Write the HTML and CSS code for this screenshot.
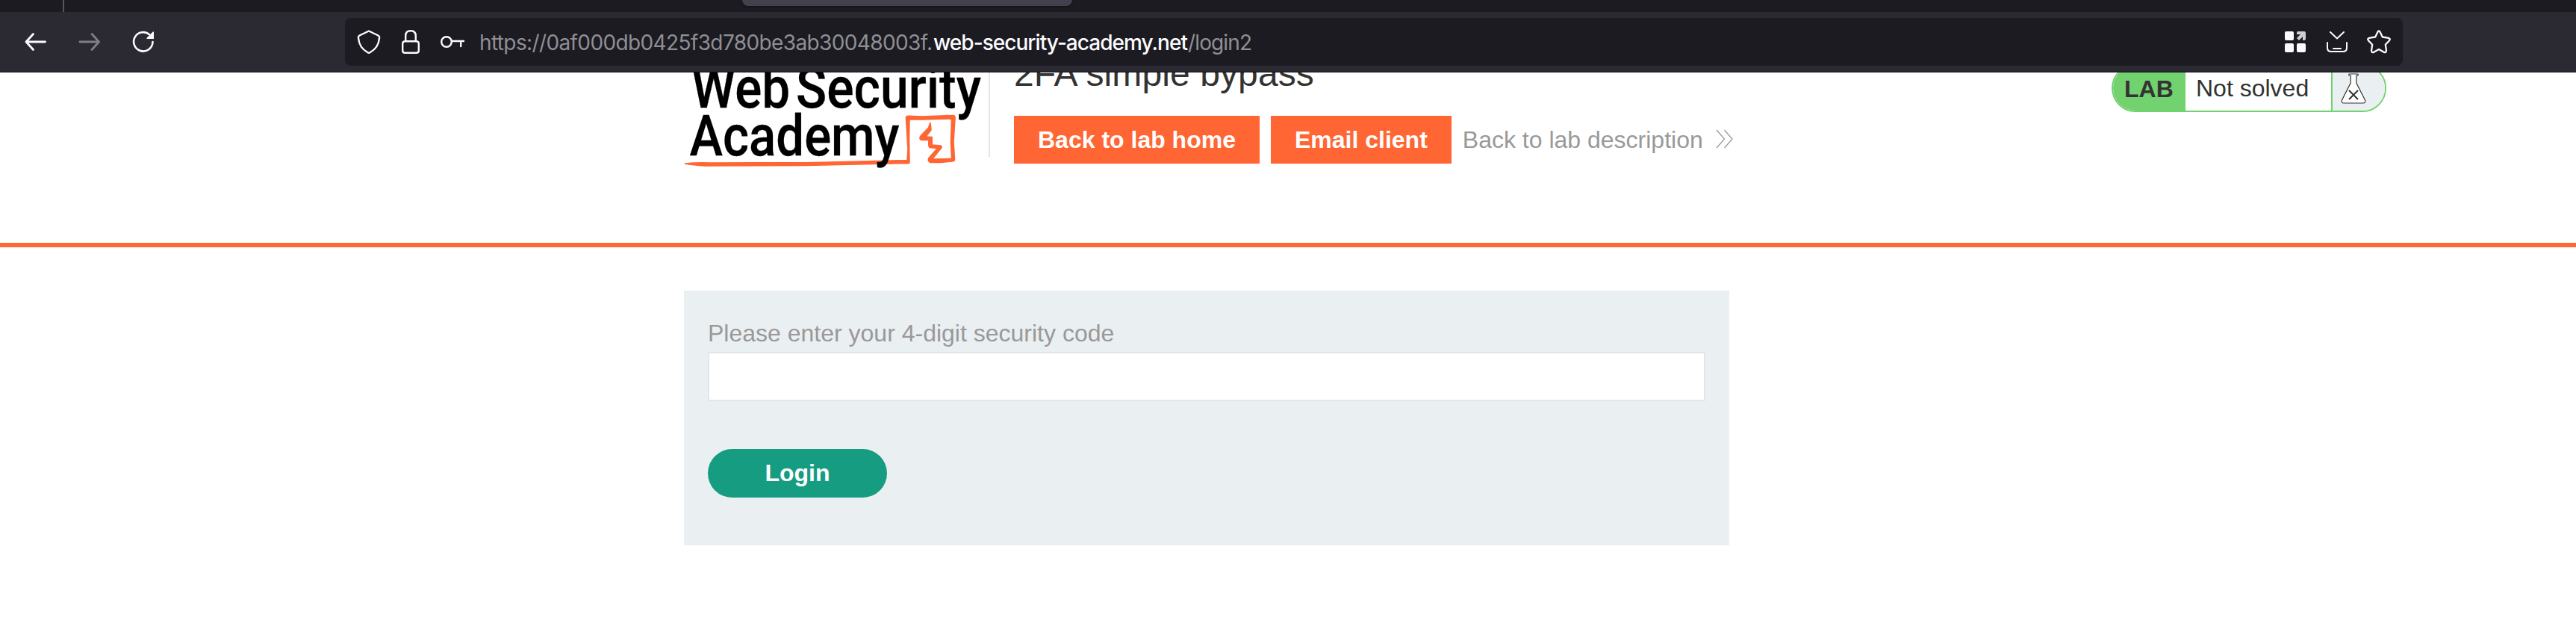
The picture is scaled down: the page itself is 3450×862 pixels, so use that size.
FILE: index.html
```html
<!DOCTYPE html>
<html lang="en">
<head>
<meta charset="utf-8">
<title>2FA simple bypass</title>
<link rel="stylesheet" href="styles.css">
</head>
<body>
<div class="tabstrip"><span class="tab-divider"></span><span class="tab"></span></div>
<div class="toolbar">
  <nav class="nav-icons">
    <svg class="icon" width="32" height="32" viewBox="0 0 32 32"><path d="M28.500 16H3.500M12.500 5.500 3 16 12.500 26.500" stroke-width="2.800"/></svg>
    <svg class="icon dim" width="32" height="32" viewBox="0 0 32 32"><path d="M3 16H28M19 5.500 28.500 16 19 26.500" stroke-width="2.800"/></svg>
    <svg class="icon" width="32" height="32" viewBox="0 0 32 32"><path d="M28.5 16A12.7 12.7 0 1 1 24.5 6.6" stroke-width="2.6"/><path d="M30 2.7V12H20.5Q20 11 21 10.2L28.5 2.8Q29.3 2 30 2.7Z" class="solid"/></svg>
  </nav>
  <div class="urlbar">
    <svg class="icon" width="32" height="32" viewBox="0 0 32 32"><path d="M16 1.5 28.5 7.5Q30.5 8.500 30 11 29 24 17.500 30.200 16 31.200 14.500 30.200 3 24 2 11 1.500 8.500 3.500 7.500Z" stroke-width="2.4"/></svg>
    <svg class="icon lock" width="24" height="32" viewBox="0 0 24 32"><path d="M5.200 15V8Q5.200 1.200 12 1.200T18.800 8V15M4.500 15.200H19.500Q22.800 15.200 22.800 18.500V27.500Q22.800 30.800 19.500 30.800H4.500Q1.200 30.800 1.200 27.500V18.500Q1.200 15.200 4.500 15.200Z" stroke-width="2.4"/></svg>
    <svg class="icon key" width="32" height="32" viewBox="0 0 32 32"><circle cx="8" cy="16" r="6.800" stroke-width="2.4"/><path d="M15 15H32M27.200 15V22" stroke-width="2.4"/></svg>
    <svg class="url" width="1050" height="48" viewBox="0 0 1050 48">
      <text x="0" y="35" textLength="607">https://0af000db0425f3d780be3ab30048003f.</text>
      <text x="608" y="35" textLength="341" class="domain">web-security-academy.net</text>
      <text x="949" y="35" textLength="86">/login2</text>
    </svg>
    <div class="page-actions">
      <svg class="icon" width="28" height="28" viewBox="0 0 28 28"><g class="solid"><rect width="12" height="12" rx="2"/><rect y="16" width="12" height="12" rx="2"/><rect x="16" y="16" width="12" height="12" rx="2"/></g><path class="soft" d="M18 0H26Q28 0 28 2V10Q28 12 26 12H24V7L19 12 16 9 21 4H16V2Q16 0 18 0Z"/></svg>
      <svg class="icon" width="28" height="28" viewBox="0 0 28 28"><path d="M5 1 14 9.500 23 1M1 15V22Q1 27 6 27H22Q27 27 27 22V15M9 23H19" stroke-width="2"/></svg>
      <svg class="icon" width="32" height="32" viewBox="0 0 32 32"><path d="M14.200 3.300Q16 -0.300 17.800 3.300L20.800 9.500 27.800 10.600Q32.500 11.500 29.800 14.500L24.800 19.700 25.900 27.100Q26.300 31.200 22.300 29.600L16 26 9.700 29.600Q5.700 31.200 6.100 27.100L7.200 19.700 2.200 14.500Q-0.500 11.500 4.200 10.600L11.200 9.500Z" stroke-width="2.300"/></svg>
    </div>
  </div>
</div>
<main class="page">
  <header class="lab-header">
    <svg class="logo" width="408" height="128" viewBox="916 97 408 128">
      <path class="ink" d="M917 219Q932 217.500 950 218L1080 217.800 1215 214.500 1216 200 1213.500 158Q1213 155 1217 155.200L1235 156 1276 154.500Q1279.300 154.500 1279 158L1277 190 1278.500 213Q1278.500 216 1275 216L1260 217.500 1246 217.500Q1242 216 1244 211.500L1255.500 198.500 1245 197.500Q1243.200 196 1244 187.500L1234 187.500Q1230.500 186 1233 182L1243.500 171 1246 164 1247 174 1240 183 1248.200 183.500V194L1260 195Q1262.500 197 1259.500 199.500L1248.500 213 1274.500 212.500 1273.500 190 1274.500 159 1235 160 1218 160 1217.500 185 1218 217Q1218 219.500 1214 218.500L1080 221.500 945 222Q928 221 917 219Z"/>
      <text x="926" y="143.500" textLength="132" lengthAdjust="spacingAndGlyphs">Web</text>
      <text x="1066" y="143.500" textLength="248" lengthAdjust="spacingAndGlyphs">Security</text>
      <text x="923.500" y="208" textLength="281" lengthAdjust="spacingAndGlyphs">Academy</text>
    </svg>
    <div class="title-block">
      <h2>2FA simple bypass</h2>
      <div class="links">
        <a class="button">Back to lab home</a>
        <a class="button">Email client</a>
        <a class="back">Back to lab description<svg width="24" height="26" viewBox="0 0 24 26"><path d="M1 1 11.500 13 1 25M11.500 1 22 13 11.500 25"/></svg></a>
      </div>
    </div>
    <div class="status">
      <strong>LAB</strong><span class="state">Not solved</span>
      <span class="flask"><svg width="34" height="42" viewBox="0 0 34 42"><path d="M11.500 1H22.500Q23.500 1 23 3H20.800V13L32.500 36Q33.500 40 30 40H4Q.500 40 1.500 36L13.200 13V3H11Q10.500 1 11.500 1Z" class="glass"/><path d="M11 23 23 35M23 23 11 35" class="cross"/></svg></span>
    </div>
  </header>
  <form class="login">
    <label for="code">Please enter your 4-digit security code</label>
    <input id="code" type="text">
    <button type="button">Login</button>
  </form>
</main>
</body>
</html>
```
FILE: styles.css
```css
* { box-sizing: border-box; }
body { margin: 0; height: 862px; overflow: hidden; background: #fff; color: #333332; font: 32px/1.2 "Liberation Sans", Arial, sans-serif; }
svg { display: block; flex: none; }
.tabstrip { display: flex; height: 16px; background: #1c1b22; }
.tab-divider { width: 2px; height: 16px; margin-left: 84px; background: #57565d; }
.tab { width: 442px; height: 8px; margin-left: 908px; border-radius: 0 0 8px 8px; background: #42414d; box-shadow: 0 0 4px rgba(0,0,0,.5); }
.toolbar { display: flex; height: 81px; padding-top: 8px; background: #2b2a33; border-bottom: 1px solid #0c0c0d; }
.nav-icons { display: flex; width: 462px; height: 64px; padding-left: 32px; gap: 40px; align-items: center; }
.icon { fill: none; stroke: #fbfbfe; stroke-linejoin: round; stroke-linecap: round; }
.dim { opacity: .4; }
.icon .solid { fill: #fbfbfe; stroke: none; }
.icon .soft { fill: #cfcfd1; stroke: none; }
.urlbar { display: flex; align-items: center; width: 2756px; height: 64px; padding: 0 16px; border-radius: 8px; background: #1c1b22; }
.lock { margin-left: 28px; }
.key { margin-left: 28px; }
.url { margin-left: 20px; font: 28px Inter, sans-serif; fill: #8f8f94; }
.url .domain { fill: #fbfbfe; font-weight: 500; }
.page-actions { display: flex; align-items: center; gap: 28px; margin-left: auto; }
.page-actions svg:last-child { margin-left: -2px; }
.lab-header { display: flex; align-items: flex-start; height: 234px; padding-left: 916px; border-bottom: 6px solid #ff6633; overflow: hidden; }
.logo text { font: 500 76px Roboto, sans-serif; fill: #000; stroke: #000; stroke-width: .3; }
.logo .ink { fill: #ff6633; stroke: #ff6633; stroke-width: 1.6; }
.title-block { height: 113px; width: 1504px; padding-left: 32px; border-left: 2px solid #e5e5e5; }
h2 { margin: -26px 0 28px; font-size: 48px; line-height: 56px; font-weight: 400; letter-spacing: .1px; }
.links { display: flex; gap: 15px; height: 64px; }
.button { height: 64px; padding: 0 32px; background: #ff6633; color: #fff; font-weight: 700; line-height: 64px; white-space: nowrap; }
.back { display: flex; align-items: center; gap: 17px; height: 64px; color: #999; }
.back path { fill: none; stroke: #999; stroke-width: 1.3; }
.back svg { margin-top: -2px; }
.status { display: flex; width: 368px; height: 64px; margin-top: -11px; border: 2px solid #72d26f; border-radius: 32px; overflow: hidden; line-height: 62px; }
.status strong { width: 97px; padding-left: 15px; background: #72d26f; }
.state { width: 195px; padding-left: 14px; line-height: 60px; }
.flask { display: flex; flex: 1; padding: 10px 0 0 11px; background: #eaeff2; border-left: 2px solid #72d26f; }
.glass { fill: #fff; stroke: #333332; stroke-width: 1.200; }
.cross { fill: none; stroke: #333332; stroke-width: 2; }
.login { display: flex; flex-direction: column; width: 1400px; height: 341px; margin: 58px 0 0 916px; padding: 38px 32px 0; background: #eaeff2; color: #999; }
.login label { height: 44px; line-height: 38px; }
.login input { height: 66px; border: 2px solid #e5e5e5; background: #fff; font: inherit; outline: 0; padding: 0 16px; }
.login button { width: 240px; height: 65px; margin-top: 64px; padding: 0; border: 0; border-radius: 33px; background: #169c80; color: #fff; font: 700 32px "Liberation Sans", Arial, sans-serif; }
```
